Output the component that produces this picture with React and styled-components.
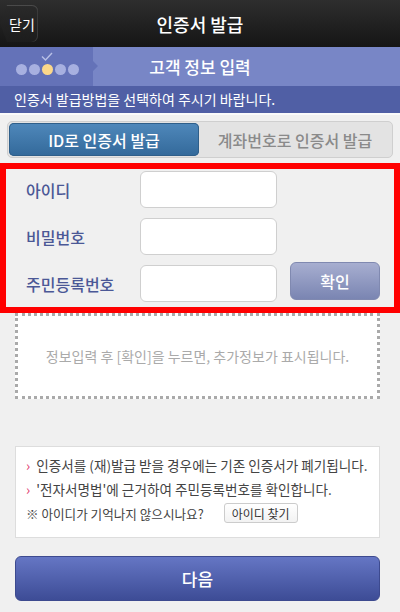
import styled, { createGlobalStyle } from 'styled-components';

const GlobalStyle = createGlobalStyle`
  html, body {
    margin: 0;
    padding: 0;
    background: #f0f0f0;
    font-family: "Noto Sans CJK KR", "Noto Sans", sans-serif;
  }
  * { box-sizing: border-box; }
`;

const Page = styled.div`
  width: 400px;
  height: 612px;
  background: #f0f0f0;
  overflow: hidden;
  display: flex;
  flex-direction: column;
`;

const Header = styled.header`
  position: relative;
  height: 47px;
  flex: none;
  background: linear-gradient(#2e2e2e, #151515);
  display: flex;
  align-items: center;
  justify-content: center;
  color: #fff;
  font-size: 18px;
  font-weight: 500;
`;

const CloseButton = styled.button`
  position: absolute;
  left: 0;
  top: 5px;
  width: 38px;
  height: 37px;
  border: none;
  padding: 0 0 0 6px;
  color: #fff;
  font-family: inherit;
  font-size: 14px;
  background: linear-gradient(#2a2a2a, #1c1c1c);
  clip-path: polygon(7px 0, 100% 0, 100% 100%, 7px 100%, 0 50%);
  border-radius: 0 6px 6px 0;
  box-shadow: inset 0 1px 0 #4a4a4a, inset -1px 0 0 #3a3a3a;
`;

const StepBar = styled.div`
  height: 39px;
  flex: none;
  display: flex;
  background: #7886c6;
`;

const StepDots = styled.div`
  position: relative;
  width: 98px;
  flex: none;
  background: #6472b8;
  display: flex;
  align-items: center;
  padding-left: 16px;
  gap: 2px;
  clip-path: polygon(0 0, 93px 0, 93px 14px, 98px 19px, 93px 24px, 93px 100%, 0 100%);
`;

const Dot = styled.span`
  width: 11px;
  height: 11px;
  margin-top: 6px;
  border-radius: 50%;
  background: ${p => (p.$active ? '#fcd88a' : '#a7b0e0')};
`;

const Check = styled.svg`
  position: absolute;
  left: 41px;
  top: 5px;
`;

const StepTitle = styled.div`
  flex: 1;
  display: flex;
  align-items: center;
  justify-content: center;
  color: #fff;
  font-size: 17px;
  font-weight: 500;
  padding-right: 98px;
`;

const InfoBar = styled.div`
  height: 29px;
  flex: none;
  background: #505fa5;
  color: #fff;
  font-size: 14px;
  display: flex;
  align-items: center;
  padding: 0 0 2px 14px;
  border-bottom: 2px solid #fafafa;
`;

const Tabs = styled.div`
  margin: 6px 7px 5px;
  height: 37px;
  flex: none;
  display: flex;
  padding: 1px;
  background: #e3e3e3;
  border: 1px solid #cfcfcf;
  border-radius: 5px;
`;

const Tab = styled.div`
  width: ${p => (p.$active ? '190px' : 'auto')};
  flex: ${p => (p.$active ? 'none' : '1')};
  display: flex;
  align-items: center;
  justify-content: center;
  font-size: 16px;
  font-weight: 500;
  border-radius: 5px;
  color: ${p => (p.$active ? '#fff' : '#8a8a8a')};
  background: ${p => (p.$active ? 'linear-gradient(#4f88bb, #33699a)' : 'transparent')};
  box-shadow: ${p => (p.$active ? 'inset 0 0 0 1px #2f5f8a' : 'none')};
`;

const FormBox = styled.div`
  border: 6px solid #ff0000;
  height: 150px;
  flex: none;
  padding: 2px 14px 0 20px;
  display: grid;
  grid-template-columns: 101px 137px 1fr;
  grid-auto-rows: 37px;
  row-gap: 10px;
  column-gap: 13px;
  align-items: center;
`;

const Label = styled.label`
  color: #4b5896;
  font-size: 16px;
  font-weight: 500;
`;

const Input = styled.input`
  width: 137px;
  height: 37px;
  border: 1px solid #cfcfcf;
  border-radius: 6px;
  background: #fff;
`;

const ConfirmButton = styled.button`
  width: 90px;
  height: 38px;
  margin-top: -5px;
  border: 1px solid #8089b0;
  border-radius: 6px;
  background: linear-gradient(#a7aed0, #7a85b2);
  color: #fff;
  font-family: inherit;
  font-size: 16px;
  font-weight: 500;
`;

const Placeholder = styled.div`
  margin: 0 20px 0 15px;
  height: 86px;
  flex: none;
  background: #fff;
  border: 3px dotted #aaa;
  display: flex;
  align-items: center;
  justify-content: center;
  color: #aaa;
  font-size: 14px;
`;

const Notice = styled.div`
  margin: 47px 20px 0 15px;
  height: 92px;
  flex: none;
  background: #fff;
  border: 1px solid #ddd;
  padding: 8px 0 0 10px;
  font-size: 13.6px;
  color: #444;
  display: flex;
  flex-direction: column;
  gap: 4px;
`;

const NoticeLine = styled.div`
  display: flex;
  align-items: center;
  gap: 6px;
  height: 20px;
  font-size: ${p => (p.$small ? '12.6px' : 'inherit')};
`;

const Arrow = styled.span`
  color: #e0356a;
  font-size: 14px;
`;

const SmallButton = styled.button`
  margin-left: 14px;
  width: 74px;
  height: 20px;
  padding: 0;
  border: 1px solid #ccc;
  border-radius: 3px;
  background: linear-gradient(#fff, #f2f2f2);
  font-family: inherit;
  font-size: 12px;
  color: #333;
`;

const NextButton = styled.button`
  margin: 18px 20px 0 15px;
  height: 45px;
  flex: none;
  border: 1px solid #3d4a8f;
  border-radius: 6px;
  background: linear-gradient(#6576c4, #3d4c96);
  color: #fff;
  font-family: inherit;
  font-size: 17px;
  font-weight: 500;
`;

export default function App() {
  return (
    <Page>
      <GlobalStyle />
      <Header>
        <CloseButton>닫기</CloseButton>
        인증서 발급
      </Header>
      <StepBar>
        <StepDots>
          <Check width="12" height="9" viewBox="0 0 12 9">
            <path d="M1 4.5 L4.5 8 L11 1" fill="none" stroke="#b8c0e6" strokeWidth="1.4" />
          </Check>
          <Dot />
          <Dot />
          <Dot $active />
          <Dot />
          <Dot />
        </StepDots>
        <StepTitle>고객 정보 입력</StepTitle>
      </StepBar>
      <InfoBar>인증서 발급방법을 선택하여 주시기 바랍니다.</InfoBar>
      <Tabs>
        <Tab $active>ID로 인증서 발급</Tab>
        <Tab>계좌번호로 인증서 발급</Tab>
      </Tabs>
      <FormBox>
        <Label>아이디</Label>
        <Input />
        <span />
        <Label>비밀번호</Label>
        <Input type="password" />
        <span />
        <Label>주민등록번호</Label>
        <Input />
        <ConfirmButton>확인</ConfirmButton>
      </FormBox>
      <Placeholder>정보입력 후 [확인]을 누르면, 추가정보가 표시됩니다.</Placeholder>
      <Notice>
        <NoticeLine>
          <Arrow>›</Arrow>인증서를 (재)발급 받을 경우에는 기존 인증서가 폐기됩니다.
        </NoticeLine>
        <NoticeLine>
          <Arrow>›</Arrow>'전자서명법'에 근거하여 주민등록번호를 확인합니다.
        </NoticeLine>
        <NoticeLine $small>
          ※ 아이디가 기억나지 않으시나요?
          <SmallButton>아이디 찾기</SmallButton>
        </NoticeLine>
      </Notice>
      <NextButton>다음</NextButton>
    </Page>
  );
}
